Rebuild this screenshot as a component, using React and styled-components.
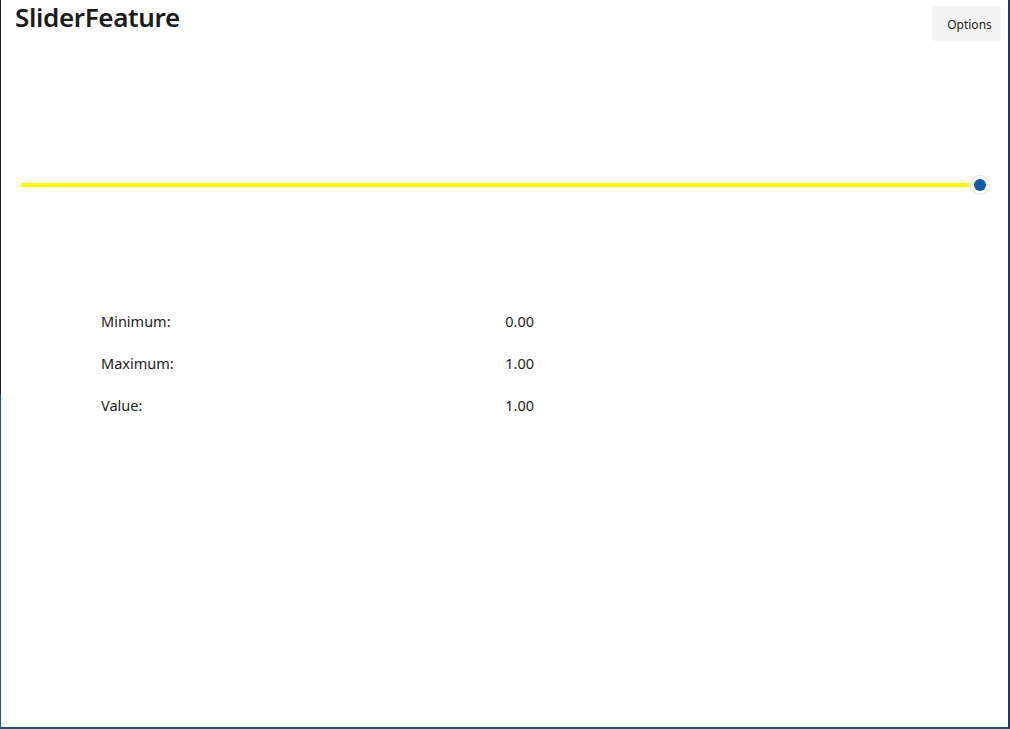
import React from "react";
import styled, { createGlobalStyle } from "styled-components";

const GlobalStyle = createGlobalStyle`
  html, body {
    margin: 0;
    padding: 0;
    background: #fff;
  }
  body {
    font-family: "Noto Sans", "Open Sans", sans-serif;
  }
`;

const Window = styled.div`
  box-sizing: border-box;
  width: 1010px;
  height: 729px;
  background: #fff;
  border-right: 2px solid #1f3a66;
  border-bottom: 2px solid #1a5672;
  position: relative;
  display: flex;
  flex-direction: column;
`;

const LeftEdge = styled.div`
  position: absolute;
  left: 0;
  top: 0;
  bottom: 0;
  width: 1px;
  background: linear-gradient(to bottom, #1e1e1e 0, #1e1e1e 395px, #1a6079 395px);
`;

const Header = styled.div`
  display: flex;
  justify-content: space-between;
  align-items: flex-start;
  padding: 0 7px 0 15px;
`;

const Title = styled.h1`
  margin: 0;
  font-size: 26px;
  line-height: 34px;
  font-weight: 600;
  color: #1b1b1b;
  letter-spacing: -0.35px;
`;

const OptionsButton = styled.button`
  margin-top: 6px;
  width: 69px;
  height: 35px;
  border: none;
  border-radius: 4px;
  background: #f4f4f4;
  color: #1b1b1b;
  font-family: inherit;
  font-size: 12px;
  padding: 2px 0 0 6px;
`;

const SliderArea = styled.div`
  display: flex;
  align-items: center;
  height: 44px;
  margin-top: 122px;
  padding: 0 39px 0 21px;
`;

const Track = styled.div`
  flex: 1;
  height: 4px;
  background: #ffff00;
  position: relative;
`;

const Thumb = styled.div`
  position: absolute;
  right: -21px;
  top: 50%;
  transform: translateY(-50%);
  box-sizing: border-box;
  width: 20px;
  height: 20px;
  border-radius: 50%;
  background: #fff;
  border: 1px solid #e4e4e4;
  display: flex;
  align-items: center;
  justify-content: center;
`;

const ThumbDot = styled.div`
  width: 12px;
  height: 12px;
  border-radius: 50%;
  background: #0f5aa6;
`;

const Info = styled.div`
  display: grid;
  grid-template-columns: 403px 30px;
  row-gap: 20px;
  padding-left: 101px;
  margin-top: 103px;
`;

const Label = styled.div`
  font-size: 14.5px;
  line-height: 22px;
  color: #1b1b1b;
`;

const Value = styled(Label)`
  text-align: right;
`;

const rows = [
  ["Minimum:", "0.00"],
  ["Maximum:", "1.00"],
  ["Value:", "1.00"],
];

export default function App() {
  return (
    <>
      <GlobalStyle />
      <Window>
        <LeftEdge />
        <Header>
          <Title>SliderFeature</Title>
          <OptionsButton>Options</OptionsButton>
        </Header>
        <SliderArea>
          <Track>
            <Thumb>
              <ThumbDot />
            </Thumb>
          </Track>
        </SliderArea>
        <Info>
          {rows.map(([k, v]) => (
            <React.Fragment key={k}>
              <Label>{k}</Label>
              <Value>{v}</Value>
            </React.Fragment>
          ))}
        </Info>
      </Window>
    </>
  );
}
